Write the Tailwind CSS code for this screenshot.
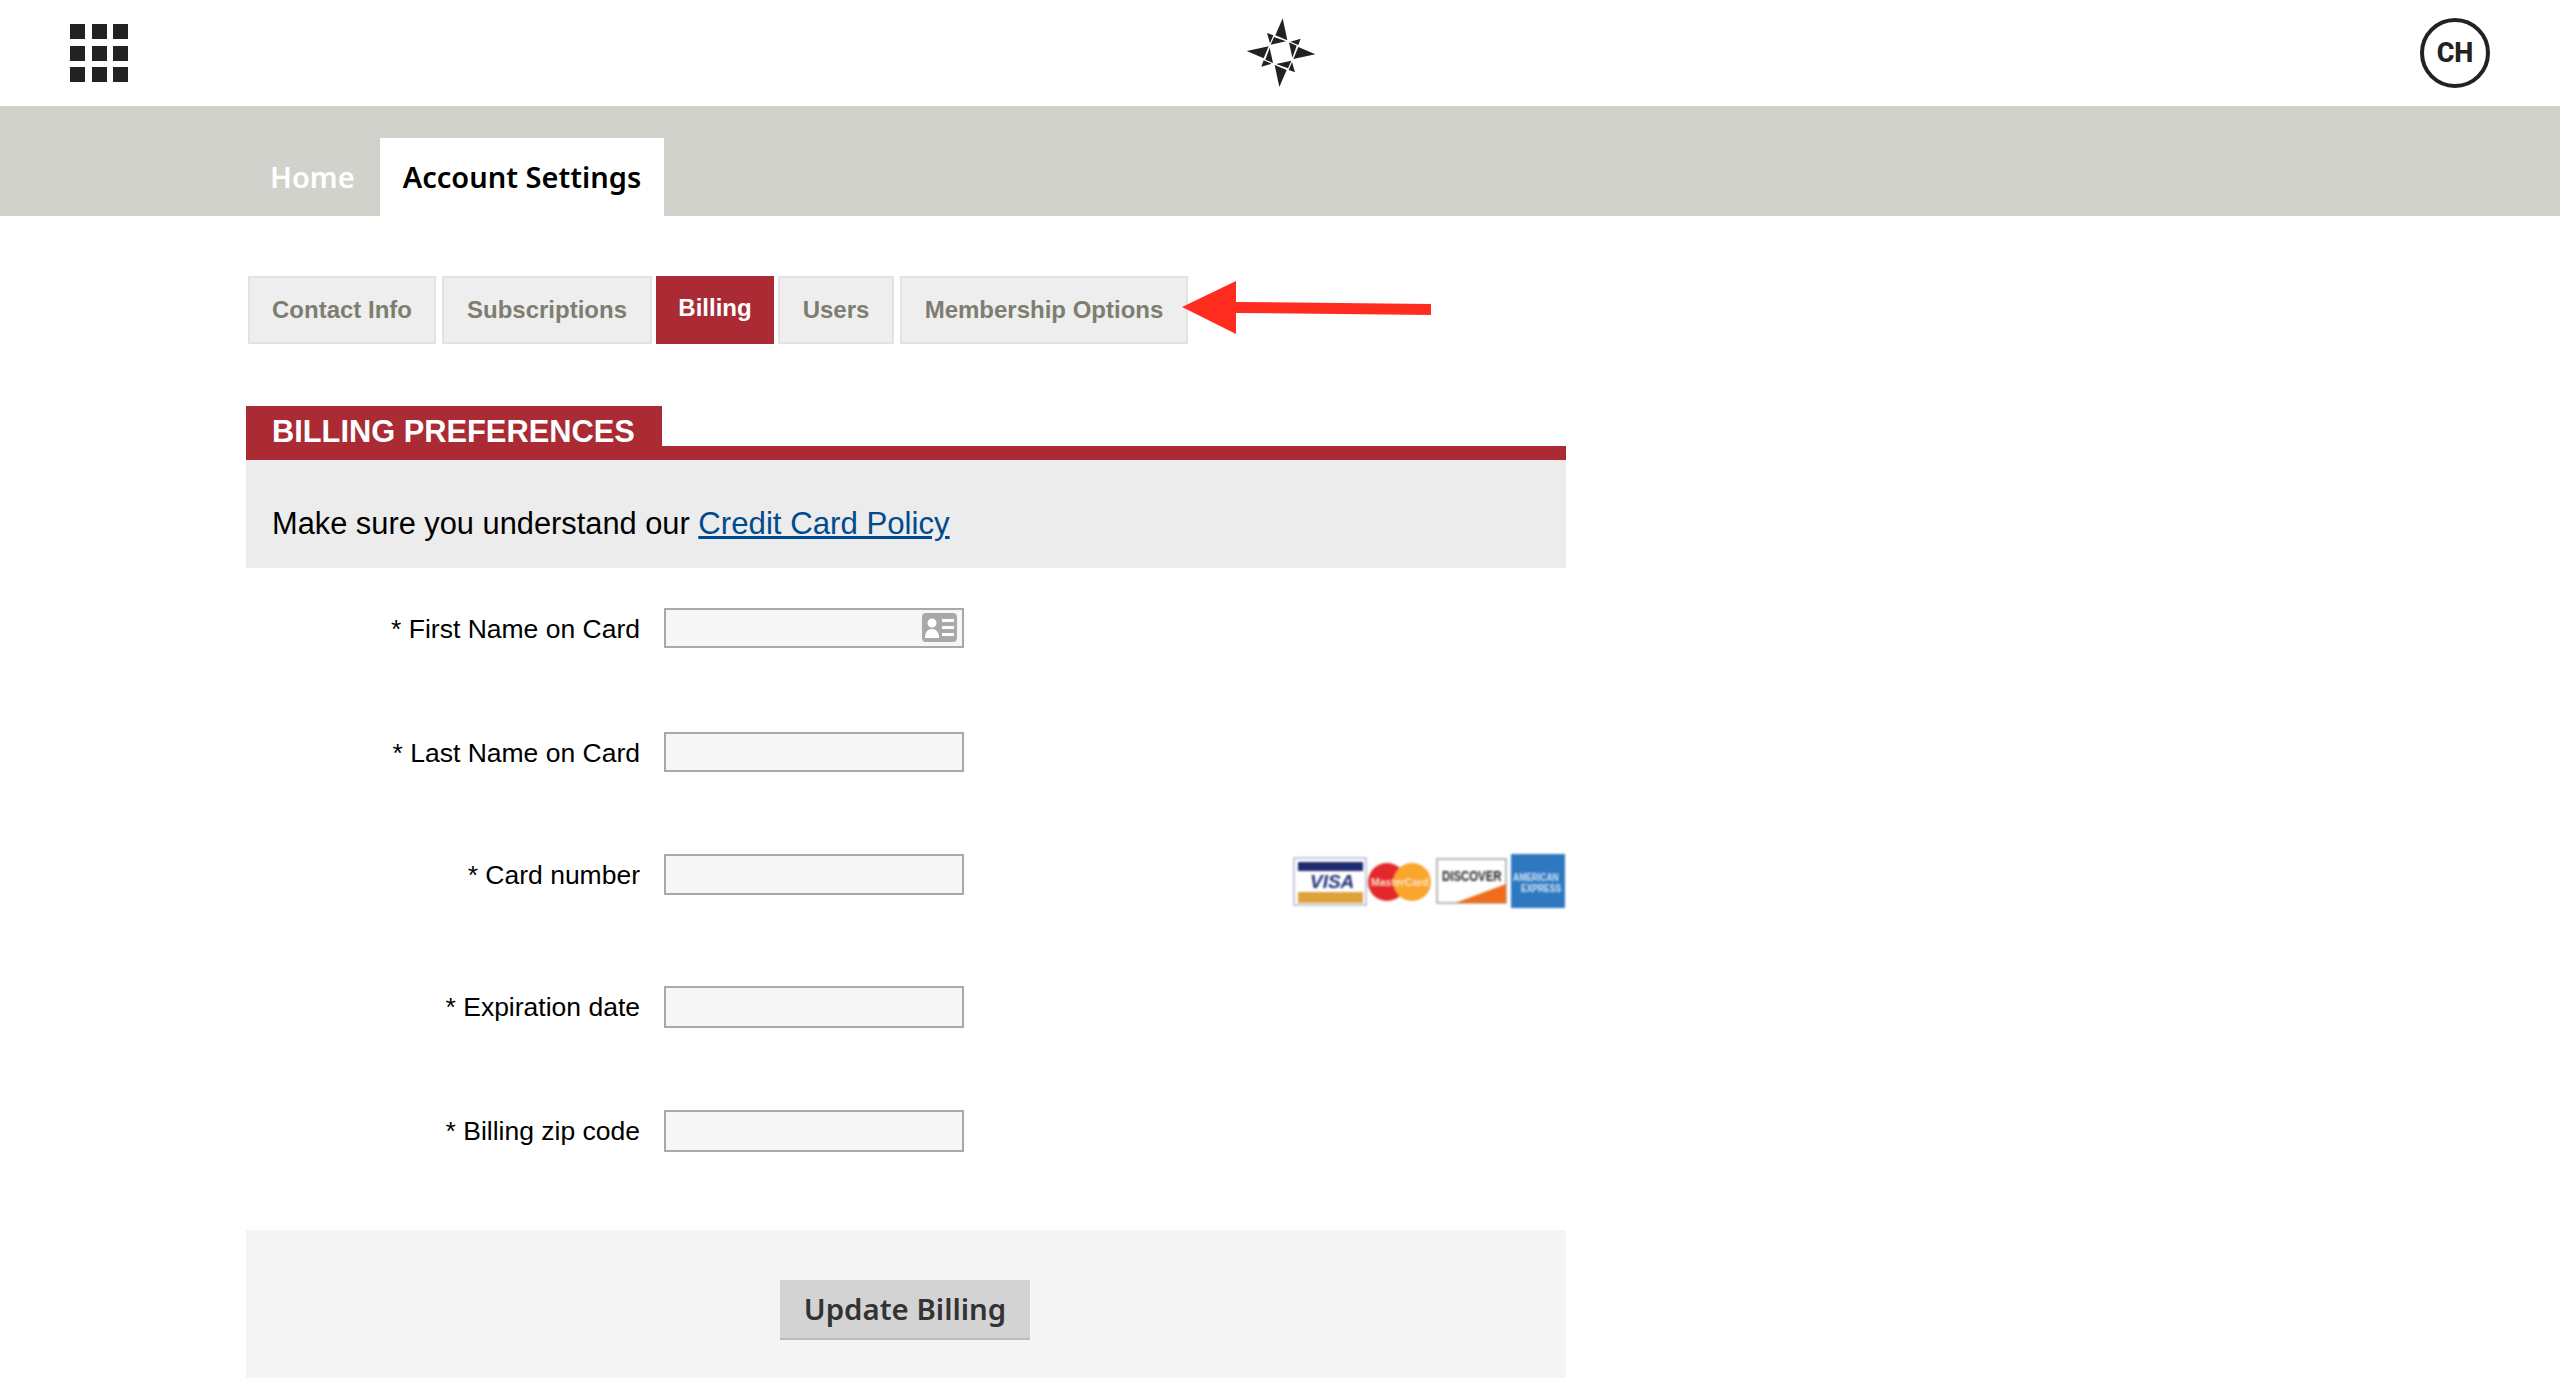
<!doctype html>
<html>
<head>
<meta charset="utf-8">
<script src="https://cdn.jsdelivr.net/npm/@tailwindcss/browser@4"></script>
</head>
<body class="bg-white font-['Liberation_Sans',sans-serif]">
<div class="h-[1378px] w-[2560px] overflow-hidden">
  <header class="flex h-[106px] items-center justify-between pl-[70px] pr-[70px]">
    <div class="grid w-[58px] grid-cols-[15px_15px_15px] justify-between gap-y-[6.5px]">
      <i class="h-[15px] bg-[#222]"></i><i class="h-[15px] bg-[#222]"></i><i class="h-[15px] bg-[#222]"></i>
      <i class="h-[15px] bg-[#222]"></i><i class="h-[15px] bg-[#222]"></i><i class="h-[15px] bg-[#222]"></i>
      <i class="h-[15px] bg-[#222]"></i><i class="h-[15px] bg-[#222]"></i><i class="h-[15px] bg-[#222]"></i>
    </div>
    <svg width="120" height="100" viewBox="0 0 360 300" class="mb-[6px] ml-[14px]" fill="#222">
      <g><path d="M185 55 199 121 163 106Z"/><path d="M159 111 195 124 149 134Z"/><path d="M138 99 157 106 147 130Z"/></g>
      <g transform="rotate(90 180 158)"><path d="M185 55 199 121 163 106Z"/><path d="M159 111 195 124 149 134Z"/><path d="M138 99 157 106 147 130Z"/></g>
      <g transform="rotate(180 180 158)"><path d="M185 55 199 121 163 106Z"/><path d="M159 111 195 124 149 134Z"/><path d="M138 99 157 106 147 130Z"/></g>
      <g transform="rotate(270 180 158)"><path d="M185 55 199 121 163 106Z"/><path d="M159 111 195 124 149 134Z"/><path d="M138 99 157 106 147 130Z"/></g>
    </svg>
    <div class="flex h-[70px] w-[70px] items-center justify-center rounded-full border-[4px] border-[#222] font-['Roboto',sans-serif] text-[27px] font-extrabold text-[#222]">CH</div>
  </header>

  <nav class="flex h-[110px] items-end bg-[#d1d2cc] pl-[270px] font-['Noto_Sans',sans-serif] text-[29px] font-semibold">
    <a class="mb-[18px] w-[110px] text-white">Home</a>
    <a class="flex h-[78px] w-[284px] items-center justify-center bg-white text-black">Account Settings</a>
  </nav>

  <main class="ml-[246px] w-[1320px]">
    <div class="ml-[2px] mt-[60px] flex h-[68px] text-[24px] font-bold text-[#7d7e70]">
      <a class="flex w-[188px] items-center justify-center border-2 border-[#e3e3e3] bg-[#eee]">Contact Info</a>
      <a class="ml-[6px] flex w-[210px] items-center justify-center border-2 border-[#e3e3e3] bg-[#eee]">Subscriptions</a>
      <a class="ml-[4px] flex w-[118px] items-center justify-center bg-[#aa2b34] pb-[4px] text-white">Billing</a>
      <a class="ml-[4px] flex w-[116px] items-center justify-center border-2 border-[#e3e3e3] bg-[#eee]">Users</a>
      <a class="ml-[6px] flex w-[288px] items-center justify-center border-2 border-[#e3e3e3] bg-[#eee]">Membership Options</a>
      <svg width="250" height="56" viewBox="0 0 250 56" class="ml-[-6px] mt-[4px] shrink-0" fill="#ff2d1f"><path d="M0 27 54 1V22L249 24V35L54 33V54Z"/></svg>
    </div>

    <section class="mt-[62px]">
      <div class="h-[54px] border-b-[14px] border-[#aa2b34]">
        <h2 class="flex h-[54px] w-[416px] items-start bg-[#aa2b34] pl-[26px] pt-[8px] text-[30.8px] font-bold leading-[36px] text-white">BILLING PREFERENCES</h2>
      </div>
      <p class="flex h-[108px] items-end bg-[#ececec] pb-[26px] pl-[26px] text-[30.8px] leading-[36px] text-black">Make sure you understand our&nbsp;<a class="text-[31.2px] text-[#004a8f] underline">Credit Card Policy</a></p>
    </section>

    <form class="text-[26.5px] leading-[32px] text-black">
      <div class="mt-[40px] flex items-center">
        <label class="w-[394px] pt-[1px] text-right">* First Name on Card</label>
        <div class="relative ml-[24px] h-[40px] w-[300px] border-2 border-[#a9a9a9] bg-[#f6f6f6]">
          <svg width="35" height="29" viewBox="0 0 35 29" class="absolute right-[5px] top-[3px]"><rect width="35" height="29" rx="4" fill="#a9a9a9"/><circle cx="10" cy="10" r="4.5" fill="#fff"/><path d="M3 25c0-6 3-9 7-9s7 3 7 9Z" fill="#fff"/><path d="M20 6h12v3H20zM20 13h12v3H20zM20 20h12v3H20z" fill="#fff"/></svg>
        </div>
      </div>
      <div class="mt-[84px] flex items-center">
        <label class="w-[394px] pt-[1px] text-right">* Last Name on Card</label>
        <div class="ml-[24px] h-[40px] w-[300px] border-2 border-[#a9a9a9] bg-[#f6f6f6]"></div>
      </div>
      <div class="relative mt-[82px] flex items-center">
        <label class="w-[394px] pt-[1px] text-right">* Card number</label>
        <div class="ml-[24px] h-[41px] w-[300px] border-2 border-[#a9a9a9] bg-[#f6f6f6]"></div>
        <svg width="272" height="54" viewBox="0 0 272 54" class="absolute left-[1047px] top-[0px] blur-[0.8px]">
          <rect x="1" y="4" width="72" height="47" fill="#fff" stroke="#c3c7de" stroke-width="2"/>
          <rect x="5" y="8" width="65" height="9" fill="#1f2a70"/>
          <rect x="5" y="38" width="65" height="11" fill="#dca33a"/>
          <text x="17" y="34" font-family="Liberation Sans" font-size="19" font-weight="700" font-style="italic" fill="#1f2f78">VISA</text>
          <circle cx="94" cy="28" r="19" fill="#e3282c"/>
          <circle cx="119" cy="28" r="19" fill="#f9a52e"/>
          <text x="78" y="32" font-family="Liberation Sans" font-size="10.5" font-weight="700" fill="#ffe6c8">MasterCard</text>
          <rect x="144" y="5" width="69" height="44" fill="#fff" stroke="#b9b9b9" stroke-width="2"/>
          <path d="M162 49 213 30V49Z" fill="#ee6c1c"/>
          <text transform="translate(149 27) scale(.76 1)" font-family="Liberation Sans" font-size="15" font-weight="700" fill="#222">DISCOVER</text>
          <rect x="218" y="0" width="54" height="54" fill="#2e78c2"/>
          <text transform="translate(220 27) scale(.85 1)" font-family="Liberation Sans" font-size="10" font-weight="700" fill="#d8e8f7">AMERICAN</text>
          <text transform="translate(228 38) scale(.85 1)" font-family="Liberation Sans" font-size="10" font-weight="700" fill="#d8e8f7">EXPRESS</text>
        </svg>
      </div>
      <div class="mt-[91px] flex items-center">
        <label class="w-[394px] text-right">* Expiration date</label>
        <div class="ml-[24px] h-[42px] w-[300px] border-2 border-[#a9a9a9] bg-[#f6f6f6]"></div>
      </div>
      <div class="mt-[82px] flex items-center">
        <label class="w-[394px] text-right">* Billing zip code</label>
        <div class="ml-[24px] h-[42px] w-[300px] border-2 border-[#a9a9a9] bg-[#f6f6f6]"></div>
      </div>
    </form>

    <footer class="mt-[78px] h-[148px] bg-[#f5f5f5] pl-[534px] pt-[50px]">
      <button class="h-[60px] w-[250px] border-b-2 border-[#bdbdbd] bg-[#d3d3d3] font-['Noto_Sans',sans-serif] text-[29.4px] font-semibold text-[#333]">Update Billing</button>
    </footer>
  </main>
</div>
</body>
</html>
